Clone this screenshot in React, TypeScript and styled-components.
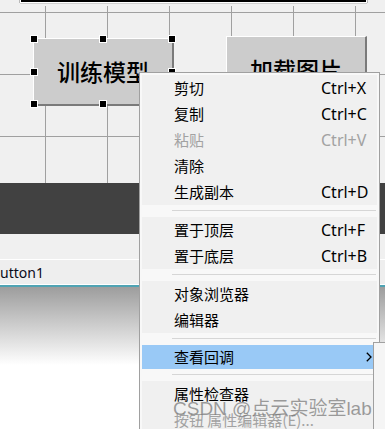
import styled, { createGlobalStyle } from "styled-components";

const GlobalStyle = createGlobalStyle`
  html, body {
    margin: 0;
    padding: 0;
  }
  body {
    background: #f0f0f0;
    overflow: hidden;
    font-family: "Noto Sans", "Noto Sans CJK SC", sans-serif;
  }
`;

type MenuItem = {
  label: string;
  shortcut?: string;
  disabled?: boolean;
  active?: boolean;
  submenu?: boolean;
};

type MenuEntry = MenuItem | "sep";

const menu: MenuEntry[] = [
  { label: "剪切", shortcut: "Ctrl+X" },
  { label: "复制", shortcut: "Ctrl+C" },
  { label: "粘贴", shortcut: "Ctrl+V", disabled: true },
  { label: "清除" },
  { label: "生成副本", shortcut: "Ctrl+D" },
  "sep",
  { label: "置于顶层", shortcut: "Ctrl+F" },
  { label: "置于底层", shortcut: "Ctrl+B" },
  "sep",
  { label: "对象浏览器" },
  { label: "编辑器" },
  "sep",
  { label: "查看回调", active: true, submenu: true },
  "sep",
  { label: "属性检查器" },
  { label: "按钮 属性编辑器(E)...", disabled: true },
];

const handles: [number, number][] = [
  [0, 0],
  [0.5, 0],
  [1, 0],
  [0, 0.5],
  [1, 0.5],
  [0, 1],
  [0.5, 1],
  [1, 1],
];

const App = () => {
  return (
    <>
      <GlobalStyle />
      <Screen>
        <TopStrip>
          <FrameBar />
        </TopStrip>
        <Canvas>
          <FormButton $left={33} $top={32}>
            训练模型
            {handles.map(([x, y]) => (
              <Handle key={`${x}-${y}`} $x={x} $y={y} />
            ))}
          </FormButton>
          <FormButton $left={226} $top={30}>
            加载图片
          </FormButton>
        </Canvas>
        <DarkBand />
        <PropsRow />
        <NameRow>
          <NameText>utton1</NameText>
        </NameRow>
        <TealLine />
        <Shade />

        <ContextMenu>
          {menu.map((entry, i) =>
            entry === "sep" ? (
              <Separator key={i}>
                <SepLine />
              </Separator>
            ) : (
              <Item key={i} $disabled={entry.disabled} $active={entry.active}>
                <Label>{entry.label}</Label>
                {entry.shortcut && <Shortcut>{entry.shortcut}</Shortcut>}
                {entry.submenu && (
                  <Arrow width="6" height="10" viewBox="0 0 6 10">
                    <path d="M0.8 0.8 L5 5 L0.8 9.2" fill="none" stroke="#000" strokeWidth="1.3" />
                  </Arrow>
                )}
              </Item>
            )
          )}
        </ContextMenu>
        <SubMenu />
        <Watermark>CSDN @点云实验室lab</Watermark>
      </Screen>
    </>
  );
};

export default App;

const Screen = styled.div`
  position: relative;
  width: 385px;
  height: 429px;
  overflow: hidden;
  display: flex;
  flex-direction: column;
  background: #f0f0f0;
`;

const TopStrip = styled.div`
  height: 6px;
  flex-shrink: 0;
`;

const FrameBar = styled.div`
  margin-left: 20px;
  width: 345px;
  height: 2px;
  background: #000;
  border: 1px solid #fff;
  border-top: none;
  box-shadow: 1px 0 0 #b8b8b8, -1px 0 0 #b8b8b8, 0 1px 0 #d0d0d0;
`;

const Canvas = styled.div`
  position: relative;
  height: 177px;
  flex-shrink: 0;
  background-color: #f0f0f0;
  background-image: linear-gradient(to right, #a0a0a0 1px, transparent 1px),
    linear-gradient(to bottom, #a0a0a0 1px, transparent 1px);
  background-size: 62px 62px, 62px 62px;
  background-position: 45px 0, 0 6px;
`;

const FormButton = styled.div<{ $left: number; $top: number }>`
  position: absolute;
  left: ${(p) => p.$left}px;
  top: ${(p) => p.$top}px;
  width: 141px;
  height: 68px;
  box-sizing: border-box;
  background: #cccccc;
  border-top: 1px solid #fff;
  border-left: 1px solid #fff;
  border-right: 2px solid #7a7a7a;
  border-bottom: 2px solid #7a7a7a;
  display: flex;
  align-items: center;
  justify-content: center;
  font-family: "Noto Sans CJK SC", sans-serif;
  font-size: 23px;
  font-weight: 500;
  color: #000;
  padding-bottom: 2px;
`;

const Handle = styled.span<{ $x: number; $y: number }>`
  position: absolute;
  left: calc(${(p) => p.$x * 100}% - 4px);
  top: calc(${(p) => p.$y * 100}% - 4px);
  width: 6px;
  height: 6px;
  background: #000;
  border: 1px solid #fff;
`;

const DarkBand = styled.div`
  height: 51px;
  flex-shrink: 0;
  background: #414141;
`;

const PropsRow = styled.div`
  height: 25px;
  flex-shrink: 0;
  background: #f0f0f0;
  border-bottom: 1px solid #fff;
`;

const NameRow = styled.div`
  height: 24px;
  flex-shrink: 0;
  background: #eeeeee;
  border-bottom: 1px solid #fff;
  display: flex;
  align-items: center;
  overflow: hidden;
`;

const NameText = styled.span`
  font-family: "Noto Sans", sans-serif;
  font-size: 14px;
  color: #0a0a1a;
  white-space: nowrap;
`;

const TealLine = styled.div`
  height: 2px;
  flex-shrink: 0;
  background: #4fa3b3;
`;

const Shade = styled.div`
  flex: 1;
  background: linear-gradient(to bottom, #9d9d9d 0, #ffffff 78px);
`;

const ContextMenu = styled.div`
  position: absolute;
  left: 139px;
  top: 72px;
  width: 241px;
  box-sizing: border-box;
  padding: 2px;
  background: #f8f8f8;
  border: 1px solid #a0a0a0;
  font-family: "Noto Sans CJK SC", sans-serif;
  font-size: 15px;
`;

const Item = styled.div<{ $disabled?: boolean; $active?: boolean }>`
  position: relative;
  height: ${(p) => (p.$active ? 24 : 26)}px;
  display: flex;
  align-items: center;
  padding-left: 32px;
  background: ${(p) => (p.$active ? "#99c9f6" : "#f0f0f0")};
  color: ${(p) => (p.$disabled ? "#a2a2a2" : "#000")};
  white-space: nowrap;
`;

const Label = styled.span`
  flex: 1;
  line-height: 20px;
`;

const Shortcut = styled.span`
  width: 56px;
  font-family: "Noto Sans", sans-serif;
  font-size: 16px;
  line-height: 20px;
`;

const Arrow = styled.svg`
  position: absolute;
  right: 5px;
  top: 7px;
`;

const Separator = styled.div`
  height: 12px;
  box-sizing: border-box;
  padding: 5px 1px 0 30px;
`;

const SepLine = styled.div`
  height: 1px;
  background: #d6d6d6;
`;

const SubMenu = styled.div`
  position: absolute;
  left: 373px;
  top: 342px;
  width: 40px;
  height: 120px;
  background: #f5f5f5;
  border: 1px solid #a0a0a0;
`;

const Watermark = styled.div`
  position: absolute;
  left: 173px;
  top: 399px;
  font-family: "Liberation Sans", "Noto Sans CJK SC", sans-serif;
  font-size: 19px;
  line-height: 19px;
  color: rgba(120, 120, 120, 0.72);
  white-space: nowrap;
  pointer-events: none;
`;
